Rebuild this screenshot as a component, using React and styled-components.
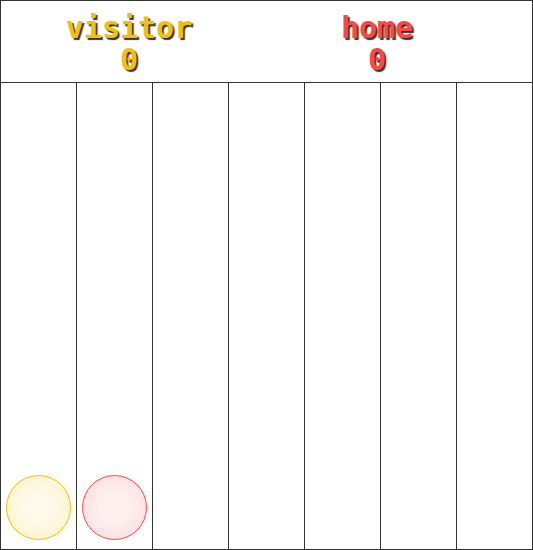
import React from 'react'
import styled, { createGlobalStyle } from 'styled-components'

const GlobalStyle = createGlobalStyle`
  html, body {
    margin: 0;
    padding: 0;
    background: #fff;
  }
  * {
    box-sizing: border-box;
  }
`

const COLUMNS = 7

const players = {
  visitor: { name: 'visitor', color: '#f2c200', light: '#fefaea', edge: '#fbf0c6' },
  home: { name: 'home', color: '#ff4646', light: '#fff0f0', edge: '#ffd8d8' }
}

// pieces dropped so far: column index -> list of players, bottom first
const board = [['visitor'], ['home'], [], [], [], [], []]

export default function App() {
  return (
    <>
      <GlobalStyle />
      <Frame>
        <ScoreBar>
          <Score color={players.visitor.color}>
            <div>visitor</div>
            <div>0</div>
          </Score>
          <Score color={players.home.color}>
            <div>home</div>
            <div>0</div>
          </Score>
        </ScoreBar>
        <Board>
          {Array.from({ length: COLUMNS }).map((_, i) => (
            <Column key={i}>
              {board[i].map((p, j) => (
                <Piece key={j} {...players[p]} />
              ))}
            </Column>
          ))}
        </Board>
      </Frame>
    </>
  )
}

const Frame = styled.div`
  width: 533px;
  height: 550px;
  border: 1px solid #333;
  border-right: none;
  display: flex;
  flex-direction: column;
`

const ScoreBar = styled.div`
  height: 82px;
  border-bottom: 1px solid #333;
  border-right: 1px solid #333;
  display: grid;
  grid-template-columns: 248px 248px;
  padding-left: 4px;
  align-content: center;
`

const Score = styled.div`
  text-align: center;
  font-family: 'DejaVu Sans Mono', monospace;
  font-weight: bold;
  font-size: 30px;
  line-height: 32px;
  color: ${p => p.color};
  text-shadow: 2px 2px 1px #333;
  padding-top: 4px;
`

const Board = styled.div`
  flex: 1;
  display: grid;
  grid-template-columns: repeat(${COLUMNS}, 76px);
`

const Column = styled.div`
  border-right: 1px solid #333;
  display: flex;
  flex-direction: column-reverse;
  align-items: center;
  padding-bottom: 9px;
`

const Piece = styled.div`
  width: 65px;
  height: 65px;
  border-radius: 50%;
  border: 1px solid ${p => p.color};
  background: radial-gradient(circle, ${p => p.light} 30%, ${p => p.edge} 100%);
`
